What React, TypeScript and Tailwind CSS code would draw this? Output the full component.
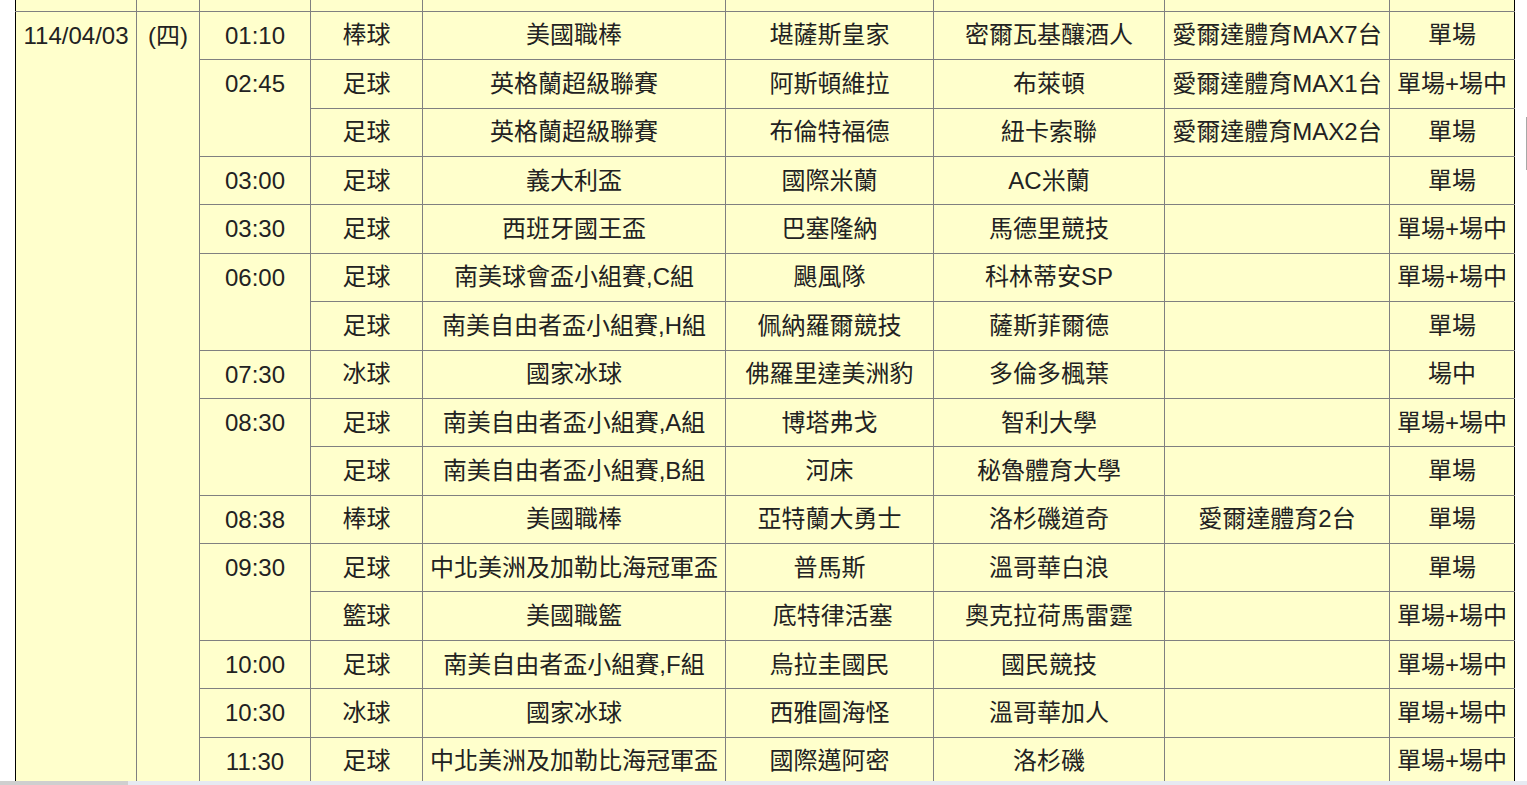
import React from "react";

type Row = {
  time?: string;
  span?: number;
  sport: string;
  league: string;
  home: string;
  away: string;
  ch: string;
  type: string;
};

const rows: Row[] = [
  { time: "01:10", span: 1, sport: "棒球", league: "美國職棒", home: "堪薩斯皇家", away: "密爾瓦基釀酒人", ch: "愛爾達體育MAX7台", type: "單場" },
  { time: "02:45", span: 2, sport: "足球", league: "英格蘭超級聯賽", home: "阿斯頓維拉", away: "布萊頓", ch: "愛爾達體育MAX1台", type: "單場+場中" },
  { sport: "足球", league: "英格蘭超級聯賽", home: "布倫特福德", away: "紐卡索聯", ch: "愛爾達體育MAX2台", type: "單場" },
  { time: "03:00", span: 1, sport: "足球", league: "義大利盃", home: "國際米蘭", away: "AC米蘭", ch: "", type: "單場" },
  { time: "03:30", span: 1, sport: "足球", league: "西班牙國王盃", home: "巴塞隆納", away: "馬德里競技", ch: "", type: "單場+場中" },
  { time: "06:00", span: 2, sport: "足球", league: "南美球會盃小組賽,C組", home: "颶風隊", away: "科林蒂安SP", ch: "", type: "單場+場中" },
  { sport: "足球", league: "南美自由者盃小組賽,H組", home: "佩納羅爾競技", away: "薩斯菲爾德", ch: "", type: "單場" },
  { time: "07:30", span: 1, sport: "冰球", league: "國家冰球", home: "佛羅里達美洲豹", away: "多倫多楓葉", ch: "", type: "場中" },
  { time: "08:30", span: 2, sport: "足球", league: "南美自由者盃小組賽,A組", home: "博塔弗戈", away: "智利大學", ch: "", type: "單場+場中" },
  { sport: "足球", league: "南美自由者盃小組賽,B組", home: "河床", away: "秘魯體育大學", ch: "", type: "單場" },
  { time: "08:38", span: 1, sport: "棒球", league: "美國職棒", home: "亞特蘭大勇士", away: "洛杉磯道奇", ch: "愛爾達體育2台", type: "單場" },
  { time: "09:30", span: 2, sport: "足球", league: "中北美洲及加勒比海冠軍盃", home: "普馬斯", away: "溫哥華白浪", ch: "", type: "單場" },
  { sport: "籃球", league: "美國職籃", home: " 底特律活塞", away: "奧克拉荷馬雷霆", ch: "", type: "單場+場中" },
  { time: "10:00", span: 1, sport: "足球", league: "南美自由者盃小組賽,F組", home: "烏拉圭國民", away: "國民競技", ch: "", type: "單場+場中" },
  { time: "10:30", span: 1, sport: "冰球", league: "國家冰球", home: "西雅圖海怪", away: "溫哥華加人", ch: "", type: "單場+場中" },
  { time: "11:30", span: 1, sport: "足球", league: "中北美洲及加勒比海冠軍盃", home: "國際邁阿密", away: "洛杉磯", ch: "", type: "單場+場中" },
];

const cell = "border border-[#808080] text-center align-middle p-0 whitespace-pre leading-[28px]";
const topCell = "border border-[#808080] text-center align-top pt-[10px] px-0 pb-0 whitespace-nowrap leading-[28px]";
const spacer = "border border-[#808080] border-t-0 p-0";

export default function App() {
  return (
    <div
      className="w-[1527px] h-[785px] overflow-hidden flex flex-col bg-white text-[24px] text-[#222]"
      style={{ fontFamily: '"Liberation Sans", Arial, "Noto Sans CJK TC", sans-serif' }}
    >
      <div className="relative h-[781px] overflow-hidden">
        <table className="ml-[15px] w-[1499px] table-fixed border-collapse bg-[#ffffcc]">
          <colgroup>
            <col className="w-[121px]" />
            <col className="w-[63px]" />
            <col className="w-[111px]" />
            <col className="w-[112px]" />
            <col className="w-[303px]" />
            <col className="w-[208px]" />
            <col className="w-[231px]" />
            <col className="w-[225px]" />
            <col className="w-[125px]" />
          </colgroup>
          <tbody>
            <tr className="h-[11.3px]">
              <td className={spacer + " border-l-black"}></td>
              <td className={spacer}></td>
              <td className={spacer}></td>
              <td className={spacer}></td>
              <td className={spacer}></td>
              <td className={spacer}></td>
              <td className={spacer}></td>
              <td className={spacer}></td>
              <td className={spacer + " border-r-black"}></td>
            </tr>
            {rows.map((r, i) => (
              <tr key={i} className="h-[48.4px]">
                {i === 0 && (
                  <>
                    <td rowSpan={rows.length} className={topCell + " border-l-black"}>
                      114/04/03
                    </td>
                    <td rowSpan={rows.length} className={topCell}>
                      (四)
                    </td>
                  </>
                )}
                {r.time && (
                  <td rowSpan={r.span} className={topCell}>
                    {r.time}
                  </td>
                )}
                <td className={cell}>{r.sport}</td>
                <td className={cell}>{r.league}</td>
                <td className={cell}>{r.home}</td>
                <td className={cell}>{r.away}</td>
                <td className={cell}>{r.ch}</td>
                <td className={cell + " border-r-black"}>{r.type}</td>
              </tr>
            ))}
          </tbody>
        </table>
        <div className="absolute right-0 top-[117px] h-[53px] w-px bg-[#a8a8a8]"></div>
      </div>
      <div className="flex h-[4px]">
        <div className="w-[128px] bg-[#cfcfcf]"></div>
        <div className="flex-1 bg-[#e6eaf2]"></div>
      </div>
    </div>
  );
}
